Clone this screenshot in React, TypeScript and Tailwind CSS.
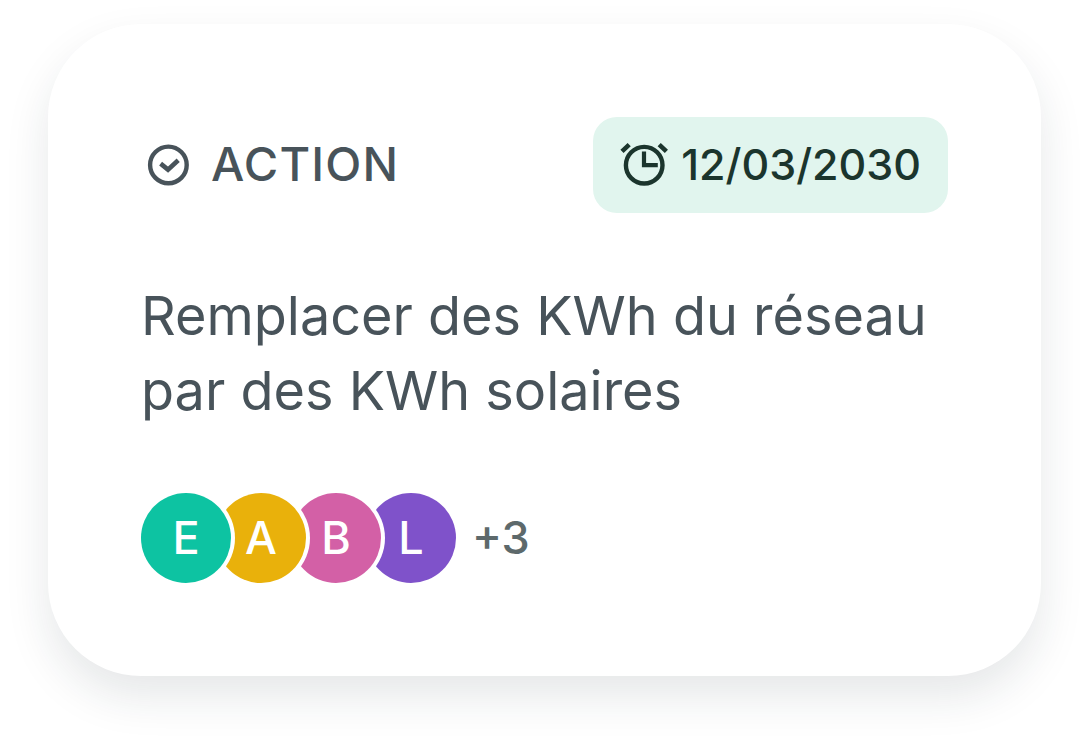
type Member = { initial: string; tone: string };

const members: Member[] = [
  { initial: "E", tone: "z-40 bg-[#0dc3a2]" },
  { initial: "A", tone: "z-30 bg-[#e9b10b]" },
  { initial: "B", tone: "z-20 bg-[#d360a6]" },
  { initial: "L", tone: "z-10 bg-[#7f52ca]" },
];

function CheckCircleIcon() {
  return (
    <svg aria-hidden="true" viewBox="0 0 42 42" className="size-[42px] shrink-0" fill="none" stroke="currentColor">
      <circle cx="21.4" cy="20.9" r="18.3" strokeWidth="4.4" />
      <path d="M13.6 19.6 L21 25.6 L31.2 16.2" strokeWidth="4.6" />
    </svg>
  );
}

function AlarmIcon() {
  return (
    <svg aria-hidden="true" viewBox="0 1 48 44" className="h-11 w-12 shrink-0 overflow-visible" fill="none" stroke="currentColor">
      <circle cx="24.2" cy="23.2" r="18.3" strokeWidth="4.4" />
      <path d="M24 9.6 V23.2 H37.8" strokeWidth="4.2" />
      <path d="M2 9.4 L9.2 2.6 M39.2 2.6 L46.4 9.4" strokeWidth="4.6" />
    </svg>
  );
}

export default function App() {
  return (
    <main className="min-h-screen bg-white pt-6 pr-[49px] pb-[73px] pl-12 font-['Inter',sans-serif] text-[#48535a]">
      <article className="rounded-[93px] bg-white p-[93px] shadow-[0_21px_45px_-1px_rgba(25,40,50,0.115)]">
        <header className="flex items-center justify-between">
          <div className="flex items-center gap-[22px] pl-1.5">
            <CheckCircleIcon />
            <span className="pb-0.5 text-[47px] leading-[54px] font-medium tracking-wide">ACTION</span>
          </div>
          <div className="flex h-24 items-center gap-[13px] rounded-3xl bg-[#e1f5ee] px-[27px] text-[#1b352d]">
            <AlarmIcon />
            <time dateTime="2030-03-12" className="pb-0.5 text-[43px] leading-[54px] font-medium">
              12/03/2030
            </time>
          </div>
        </header>
        <h1 className="mt-[65px] text-[54px] leading-[75px] font-normal">
          Remplacer des KWh du réseau par des KWh solaires
        </h1>
        <div className="mt-[65px] flex items-center gap-4">
          <ul className="flex -space-x-[15px]">
            {members.map((m) => (
              <li
                key={m.initial}
                className={`relative flex size-[90px] items-center justify-center rounded-full text-[45px] font-medium text-white ring-4 ring-white ${m.tone}`}
              >
                {m.initial}
              </li>
            ))}
          </ul>
          <span className="text-[45px] leading-[54px] font-medium text-[#5d696b]">+3</span>
        </div>
      </article>
    </main>
  );
}
